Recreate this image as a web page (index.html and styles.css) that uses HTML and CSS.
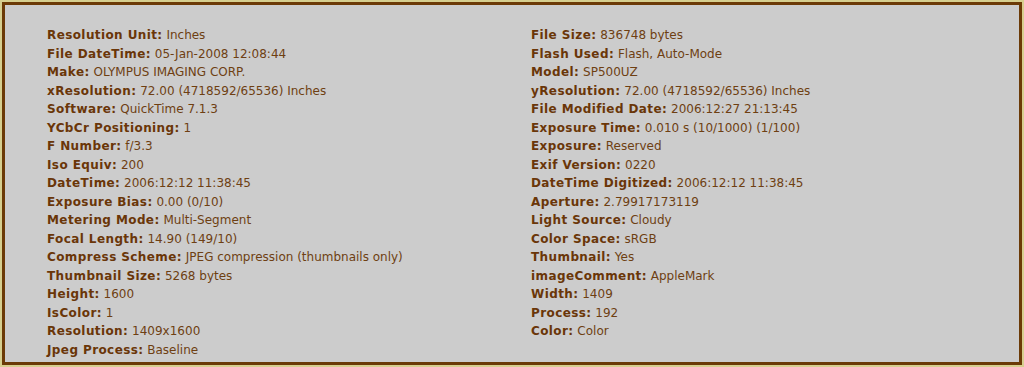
FILE: index.html
```html
<!DOCTYPE html>
<html>
<head>
<meta charset="utf-8">
<link rel="stylesheet" href="styles.css">
</head>
<body>
<div class="frame">
  <div class="grid">
    <div class="col">
      <div class="row"><b>Resolution Unit:</b> Inches</div>
      <div class="row"><b>File DateTime:</b> 05-Jan-2008 12:08:44</div>
      <div class="row"><b>Make:</b> OLYMPUS IMAGING CORP.</div>
      <div class="row"><b>xResolution:</b> 72.00 (4718592/65536) Inches</div>
      <div class="row"><b>Software:</b> QuickTime 7.1.3</div>
      <div class="row"><b>YCbCr Positioning:</b> 1</div>
      <div class="row"><b>F Number:</b> f/3.3</div>
      <div class="row"><b>Iso Equiv:</b> 200</div>
      <div class="row"><b>DateTime:</b> 2006:12:12 11:38:45</div>
      <div class="row"><b>Exposure Bias:</b> 0.00 (0/10)</div>
      <div class="row"><b>Metering Mode:</b> Multi-Segment</div>
      <div class="row"><b>Focal Length:</b> 14.90 (149/10)</div>
      <div class="row"><b>Compress Scheme:</b> JPEG compression (thumbnails only)</div>
      <div class="row"><b>Thumbnail Size:</b> 5268 bytes</div>
      <div class="row"><b>Height:</b> 1600</div>
      <div class="row"><b>IsColor:</b> 1</div>
      <div class="row"><b>Resolution:</b> 1409x1600</div>
      <div class="row"><b>Jpeg Process:</b> Baseline</div>
    </div>
    <div class="col">
      <div class="row"><b>File Size:</b> 836748 bytes</div>
      <div class="row"><b>Flash Used:</b> Flash, Auto-Mode</div>
      <div class="row"><b>Model:</b> SP500UZ</div>
      <div class="row"><b>yResolution:</b> 72.00 (4718592/65536) Inches</div>
      <div class="row"><b>File Modified Date:</b> 2006:12:27 21:13:45</div>
      <div class="row"><b>Exposure Time:</b> 0.010 s (10/1000) (1/100)</div>
      <div class="row"><b>Exposure:</b> Reserved</div>
      <div class="row"><b>Exif Version:</b> 0220</div>
      <div class="row"><b>DateTime Digitized:</b> 2006:12:12 11:38:45</div>
      <div class="row"><b>Aperture:</b> 2.79917173119</div>
      <div class="row"><b>Light Source:</b> Cloudy</div>
      <div class="row"><b>Color Space:</b> sRGB</div>
      <div class="row"><b>Thumbnail:</b> Yes</div>
      <div class="row"><b>imageComment:</b> AppleMark</div>
      <div class="row"><b>Width:</b> 1409</div>
      <div class="row"><b>Process:</b> 192</div>
      <div class="row"><b>Color:</b> Color</div>
    </div>
  </div>
</div>
</body>
</html>
```

FILE: styles.css
```css
html, body {
  margin: 0;
  padding: 0;
  background: #d6cf8f;
  height: 367px;
  overflow: hidden;
}
.frame {
  margin: 2px;
  height: 363px;
  box-sizing: border-box;
  border: 3px solid #6b3a07;
  background: #cccccc;
  padding: 21px 0 0 42px;
  font-family: "DejaVu Sans", Verdana, sans-serif;
  font-size: 12px;
  color: #6e3f12;
}
.grid {
  display: grid;
  grid-template-columns: 484px 1fr;
}
.row {
  line-height: 18.5px;
  white-space: nowrap;
}
.row b {
  color: #6a3608;
  font-weight: bold;
  letter-spacing: 0.4px;
}
```
